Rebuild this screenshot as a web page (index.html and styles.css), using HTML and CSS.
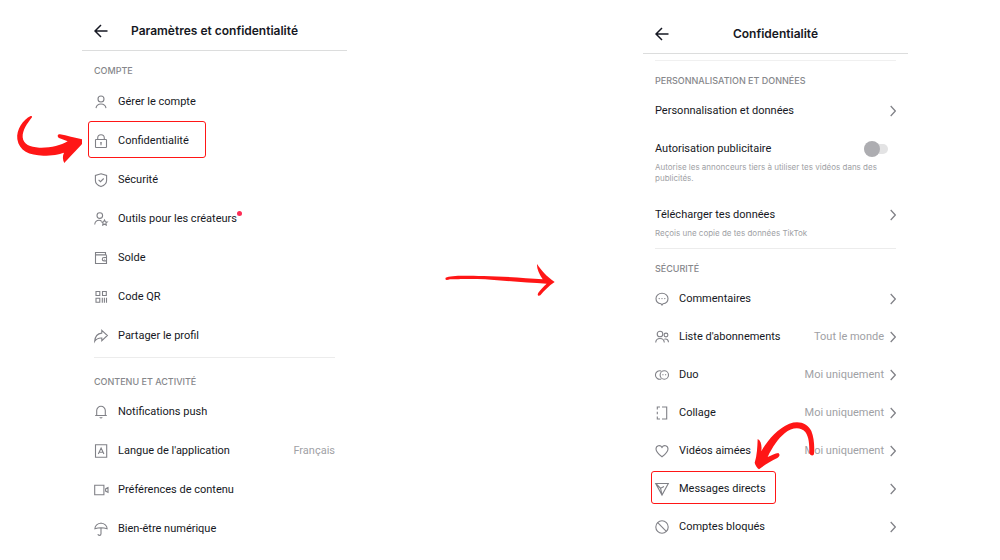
FILE: index.html
```html
<!DOCTYPE html>
<html lang="fr">
<head>
    <meta charset="UTF-8">
    <meta name="viewport" content="width=device-width, initial-scale=1.0">
    <title>Paramètres et confidentialité</title>
    <link rel="stylesheet" href="styles.css">
</head>
<body>
    <main class="steps">
        <!-- Étape 1 : paramètres -->
        <section class="screen screen-settings">
            <header class="screen-header">
                <button type="button" class="back" aria-label="Retour">
                    <svg class="icon-back" viewBox="0 0 14 14"><path d="M13.500 7H1M7 1 1 7l6 6"/></svg>
                </button>
                <h1>Paramètres et confidentialité</h1>
            </header>

            <div class="group">
                <h2>COMPTE</h2>
                <ul>
                    <li><a href="#" class="row">
                        <svg class="icon" viewBox="0 0 14 14"><circle cx="7" cy="4" r="3"/><path d="M2 13.200c.5-3 2.400-4.200 5-4.200s4.500 1.200 5 4.200"/></svg>
                        <span class="label">Gérer le compte</span>
                    </a></li>
                    <li class="marked"><a href="#" class="row">
                        <svg class="icon" viewBox="0 0 14 14"><rect x="1.500" y="5.500" width="11" height="8" rx=".6"/><path d="M3.700 5.500V4a3.300 3.300 0 0 1 6.600 0v1.500M7 8.500v2.800M6 8.800h2"/></svg>
                        <span class="label">Confidentialité</span>
                    </a>
                        <span class="frame frame-privacy"></span>
                        <svg class="arrow arrow-privacy" viewBox="45 309 210 156"><path d="M92 318C70 328 48 358 52 388c5 34 36 49 78 49 25 0 48-4 62-9-5 9-4 22 1 31 8-9 39-41 53-57v-14c-21-4-46-12-66-15-8-1-9 7-3 11l26 10c-22 13-52 20-85 19-28-1-48-10-50-31-1-22 14-42 28-60q1-5-4-4z"/></svg>
                    </li>
                    <li><a href="#" class="row">
                        <svg class="icon" viewBox="0 0 14 14"><path d="M7 .8 12.600 2.500v5c0 3-2.600 5-5.600 6.100C4 12.500 1.400 10.500 1.400 7.500v-5zM4.600 6.800l1.900 1.900 3.200-3.200"/></svg>
                        <span class="label">Sécurité</span>
                    </a></li>
                    <li><a href="#" class="row">
                        <svg class="icon" viewBox="0 0 14 14"><circle cx="5.800" cy="3.600" r="2.800"/><path d="M.7 12.500c.3-2.700 2-4.200 4.400-4.200 1 0 1.700.2 2.400.6M10.500 8l.9 1.700 1.900.2-1.400 1.300.4 1.900-1.800-.9-1.800.9.4-1.900-1.400-1.300 1.900-.2z"/></svg>
                        <span class="label">Outils pour les créateurs<span class="dot"></span></span>
                    </a></li>
                    <li><a href="#" class="row">
                        <svg class="icon" viewBox="0 0 14 14"><path d="M12.500 4.200v8.300h-11v-11h10v2.300M1.500 3.900h11M12.500 6.500H10a1.700 1.700 0 0 0 0 3.400h2.500M10.200 8.200h.6"/></svg>
                        <span class="label">Solde</span>
                    </a></li>
                    <li><a href="#" class="row">
                        <svg class="icon" viewBox="0 0 14 14"><path d="M2 1.500h3.800v4H2zM8.500 1.500h3.800v4H8.500zM2 8.200h3.800v4H2zM8.300 7.700v5M10.400 7.700v5M12.500 7.700v5"/></svg>
                        <span class="label">Code QR</span>
                    </a></li>
                    <li><a href="#" class="row">
                        <svg class="icon" viewBox="0 0 14 14"><path d="M7.800 1.300 13.400 6.500 7.800 11.700V9C4.500 8.800 2.300 9.800.7 12.300 1 7.500 3.500 4.600 7.800 4.100z"/></svg>
                        <span class="label">Partager le profil</span>
                    </a></li>
                </ul>
            </div>

            <div class="group">
                <h2>CONTENU ET ACTIVITÉ</h2>
                <ul>
                    <li><a href="#" class="row">
                        <svg class="icon" viewBox="0 0 14 14"><path d="M1.200 10.500h11.600M2.700 10.500V5.600a4.300 4.300 0 0 1 8.600 0v4.900M5.700 12.400q1.300 1.200 2.600 0"/></svg>
                        <span class="label">Notifications push</span>
                    </a></li>
                    <li><a href="#" class="row">
                        <svg class="icon" viewBox="0 0 14 14"><path d="M1.500.8h11.200v12.400H1.500zM4.300 10 7.100 4l2.800 6M5.200 8.300h3.800"/></svg>
                        <span class="label">Langue de l'application</span>
                        <span class="value">Français</span>
                    </a></li>
                    <li><a href="#" class="row">
                        <svg class="icon" viewBox="0 0 14 14"><path d="M.7 2.300h9.200v9.400H.7zM14 4.600l-2.400 1.300v2.200L14 9.400z"/></svg>
                        <span class="label">Préférences de contenu</span>
                    </a></li>
                    <li><a href="#" class="row">
                        <svg class="icon" viewBox="0 0 14 14"><path d="M.9 6.700a6.100 5.500 0 0 1 12.200 0q-3-1-6.100-1t-6.100 1zM7 .5v.7M7 5.700v6q0 1.700-1.500 1.700T4 12"/></svg>
                        <span class="label">Bien-être numérique</span>
                    </a></li>
                </ul>
            </div>
        </section>

        <!-- Flèche entre les deux étapes -->
        <div class="next">
            <svg class="arrow-next" viewBox="15 42 330 96"><path d="M17 83c16-8 62-6 114-5 61 1 125 6 177 10-11-15-18-33-17-46 14 20 27 36 53 54-18 12-31 26-43 40-7 4-10-2-6-8 8-11 16-19 25-27C256 98 190 92 135 88 87 86 49 88 30 88q-17 6-13-5z"/></svg>
        </div>

        <!-- Étape 2 : confidentialité -->
        <section class="screen screen-privacy">
            <header class="screen-header">
                <button type="button" class="back" aria-label="Retour">
                    <svg class="icon-back" viewBox="0 0 14 14"><path d="M13.500 7H1M7 1 1 7l6 6"/></svg>
                </button>
                <h1>Confidentialité</h1>
            </header>

            <div class="group group-data">
                <h2>PERSONNALISATION ET DONNÉES</h2>
                <ul>
                    <li><a href="#" class="row">
                        <span class="label">Personnalisation et données</span>
                        <svg class="chevron" viewBox="0 0 6 12"><path d="M.7 1 5.300 6 .7 11"/></svg>
                    </a></li>
                    <li class="option">
                        <div class="option-line">
                            <label for="ads">Autorisation publicitaire</label>
                            <input type="checkbox" id="ads" class="switch">
                        </div>
                        <p>Autorise les annonceurs tiers à utiliser tes vidéos dans des publicités.</p>
                    </li>
                    <li class="option">
                        <a href="#" class="option-line">
                            <span class="label">Télécharger tes données</span>
                            <svg class="chevron" viewBox="0 0 6 12"><path d="M.7 1 5.300 6 .7 11"/></svg>
                        </a>
                        <p>Reçois une copie de tes données TikTok</p>
                    </li>
                </ul>
            </div>

            <div class="group">
                <h2>SÉCURITÉ</h2>
                <ul>
                    <li><a href="#" class="row">
                        <svg class="icon" viewBox="0 0 14 14"><path d="M7 1.300c3.500 0 6 2.300 6 5.200 0 2.800-2.200 4.900-5 5.200l-1 1.400-1-1.400c-2.800-.3-5-2.400-5-5.200 0-2.900 2.500-5.200 6-5.200z"/><path class="dots" d="M4.200 6.600h0M7 6.600h0M9.800 6.600h0"/></svg>
                        <span class="label">Commentaires</span>
                        <svg class="chevron" viewBox="0 0 6 12"><path d="M.7 1 5.300 6 .7 11"/></svg>
                    </a></li>
                    <li><a href="#" class="row">
                        <svg class="icon" viewBox="0 0 14 14"><circle cx="5" cy="4" r="2.800"/><circle cx="11" cy="5" r="1.900"/><path d="M.7 12.500C.9 9.800 2.500 8.500 5 8.500s4.100 1.300 4.300 4M9.300 9.300c2.500-.9 4 .3 4.200 2.900"/></svg>
                        <span class="label">Liste d'abonnements</span>
                        <span class="value">Tout le monde</span>
                        <svg class="chevron" viewBox="0 0 6 12"><path d="M.7 1 5.300 6 .7 11"/></svg>
                    </a></li>
                    <li><a href="#" class="row">
                        <svg class="icon" viewBox="0 0 14 14"><path d="M6.200 3.100A4.200 4.200 0 1 0 6.200 10.900"/><circle cx="9.300" cy="7" r="4.200"/><path d="M7.300 6.800h1.200M10 6.800h1.200"/></svg>
                        <span class="label">Duo</span>
                        <span class="value">Moi uniquement</span>
                        <svg class="chevron" viewBox="0 0 6 12"><path d="M.7 1 5.300 6 .7 11"/></svg>
                    </a></li>
                    <li><a href="#" class="row">
                        <svg class="icon" viewBox="0 0 14 14"><path d="M7 1h4.700v12H7M5 1H2.300v2.500M2.300 5.800v2.400M2.300 10.500V13H5"/></svg>
                        <span class="label">Collage</span>
                        <span class="value">Moi uniquement</span>
                        <svg class="chevron" viewBox="0 0 6 12"><path d="M.7 1 5.300 6 .7 11"/></svg>
                    </a></li>
                    <li><a href="#" class="row">
                        <svg class="icon" viewBox="0 0 14 14"><path d="M7 12.800C3.500 10.200 1 7.900 1 5c0-3.600 4.300-4.500 6-1.600C8.700.5 13 1.400 13 5c0 2.900-2.500 5.200-6 7.800z"/></svg>
                        <span class="label">Vidéos aimées</span>
                        <span class="value">Moi uniquement</span>
                        <svg class="chevron" viewBox="0 0 6 12"><path d="M.7 1 5.300 6 .7 11"/></svg>
                    </a></li>
                    <li class="marked"><a href="#" class="row">
                        <svg class="icon" viewBox="0 0 14 14"><path d="M.7 1.500h12.600L7 13zM.7 1.500 5.600 6.300 7 13M5.600 6.300 9 4.600"/></svg>
                        <span class="label">Messages directs</span>
                        <svg class="chevron" viewBox="0 0 6 12"><path d="M.7 1 5.300 6 .7 11"/></svg>
                    </a>
                        <span class="frame frame-messages"></span>
                        <svg class="arrow arrow-messages" viewBox="340 33 189 147"><path d="M354 87c10 5 13 19 11 36 21-36 50-68 84-82 27-10 54-3 66 22 8 20 10 45 8 68-1 9-13 5-14-3 0-25-1-47-12-62-16-17-41-13-62 4-20 16-37 42-51 71 12-4 22-11 32-12 6 4 4 11-3 15-20 9-38 21-55 34-5-4-12-13-13-20 7-21 8-46 9-71z"/></svg>
                    </li>
                    <li><a href="#" class="row">
                        <svg class="icon" viewBox="0 0 14 14"><circle cx="7" cy="7" r="6.200"/><path d="m2.700 2.700 8.600 8.600"/></svg>
                        <span class="label">Comptes bloqués</span>
                        <svg class="chevron" viewBox="0 0 6 12"><path d="M.7 1 5.300 6 .7 11"/></svg>
                    </a></li>
                </ul>
            </div>
        </section>
    </main>
</body>
</html>
```

FILE: styles.css
```css
body {
    margin: 0;
    background-color: #fff;
    color: #161823;
    font-family: Roboto, "Liberation Sans", sans-serif;
    font-size: 11px;
    line-height: 16px;
}

a {
    color: inherit;
    text-decoration: none;
}

ul {
    list-style: none;
    margin: 0;
    padding: 0;
}

svg {
    display: block;
    flex: none;
}

.steps {
    display: grid;
    grid-template-columns: 265fr 296fr 265fr;
    align-items: start;
    padding: 0 9.2% 0 8.2%;
}

/* En-tête */
.screen-header {
    display: grid;
    grid-template-columns: 14px 1fr 14px;
    align-items: center;
    height: 38px;
    padding: 0 12px;
    border-bottom: 1px solid #dcdddd;
}

.screen-settings .screen-header {
    margin-top: 12px;
}

.screen-privacy .screen-header {
    margin-top: 15px;
}

.back {
    padding: 0;
    border: 0;
    background: none;
    cursor: pointer;
}

.icon-back {
    width: 14px;
    height: 14px;
    fill: none;
    stroke: #161823;
    stroke-width: 1.5;
}

h1,
h2,
.option p {
    font-family: Inter, "Liberation Sans", sans-serif;
}

h1 {
    margin: 0;
    font-size: 12px;
    font-weight: 600;
    text-align: center;
    white-space: nowrap;
}

/* Groupes */
.group {
    margin: 0 12px;
}

.group + .group {
    margin-top: 2px;
    border-top: 1px solid #ececec;
}

.group h2 {
    margin: 0;
    padding: 13px 0 4px;
    color: #86878b;
    font-size: 9px;
    font-weight: 500;
    line-height: 14px;
    white-space: nowrap;
}

.screen-settings .group + .group h2 {
    padding: 17px 0 3px;
}

.group-data {
    margin-top: 6px;
    border-top: 1px solid #f0f0f0;
}

.screen-privacy .group-data + .group {
    margin-top: 0;
}

.screen-settings .row {
    height: 39px;
}

.screen-privacy .row {
    height: 38px;
}

.row {
    display: flex;
    align-items: center;
    white-space: nowrap;
}

.icon {
    width: 14px;
    height: 14px;
    margin-right: 10px;
    fill: none;
    stroke: #808187;
    stroke-width: 1.1;
    overflow: visible;
}

.dots {
    stroke-linecap: round;
    stroke-width: 1.4;
}

.label {
    position: relative;
    margin-right: auto;
}

.value {
    color: #a0a1a5;
}

.chevron {
    width: 6px;
    height: 12px;
    margin-left: 6px;
    fill: none;
    stroke: #808187;
    stroke-width: 1.2;
}

.dot {
    position: absolute;
    top: 0;
    right: -5px;
    width: 5px;
    height: 5px;
    border-radius: 50%;
    background-color: #fe2c55;
}

/* Options avec description */
.option {
    padding: 11px 0 9px;
}

.option + .option {
    padding-top: 14px;
}

.option-line {
    display: flex;
    align-items: center;
    justify-content: space-between;
}

.option p {
    margin: 5px 0 0;
    color: #a0a1a5;
    font-size: 8px;
    line-height: 11px;
}

.switch {
    position: relative;
    width: 24px;
    height: 10px;
    margin: 0 8px 0 0;
    border-radius: 5px;
    background-color: #e3e3e4;
    appearance: none;
    cursor: pointer;
}

.switch::before {
    content: "";
    position: absolute;
    top: -3px;
    left: 0;
    width: 16px;
    height: 16px;
    border-radius: 50%;
    background-color: #adadb1;
}

.switch:checked::before {
    left: 8px;
}

/* Annotations rouges */
.marked {
    position: relative;
}

.frame {
    position: absolute;
    box-sizing: border-box;
    border: 1px solid #ff1616;
    border-radius: 3px;
    pointer-events: none;
}

.frame-privacy {
    top: 0;
    left: -6px;
    width: 118px;
    height: 37px;
}

.frame-messages {
    top: 1px;
    left: -4px;
    width: 125px;
    height: 33px;
}

.arrow {
    position: absolute;
    pointer-events: none;
    fill: #ff1616;
}

.arrow-privacy {
    top: -8px;
    left: -79px;
    width: 70px;
    height: 52px;
}

.arrow-messages {
    top: -49px;
    left: 98px;
    width: 63px;
    height: 49px;
}

.next {
    display: flex;
    justify-content: center;
    padding: 264px 0 0 10px;
}

.arrow-next {
    width: 110px;
    height: 32px;
    fill: #ff1616;
}
```
